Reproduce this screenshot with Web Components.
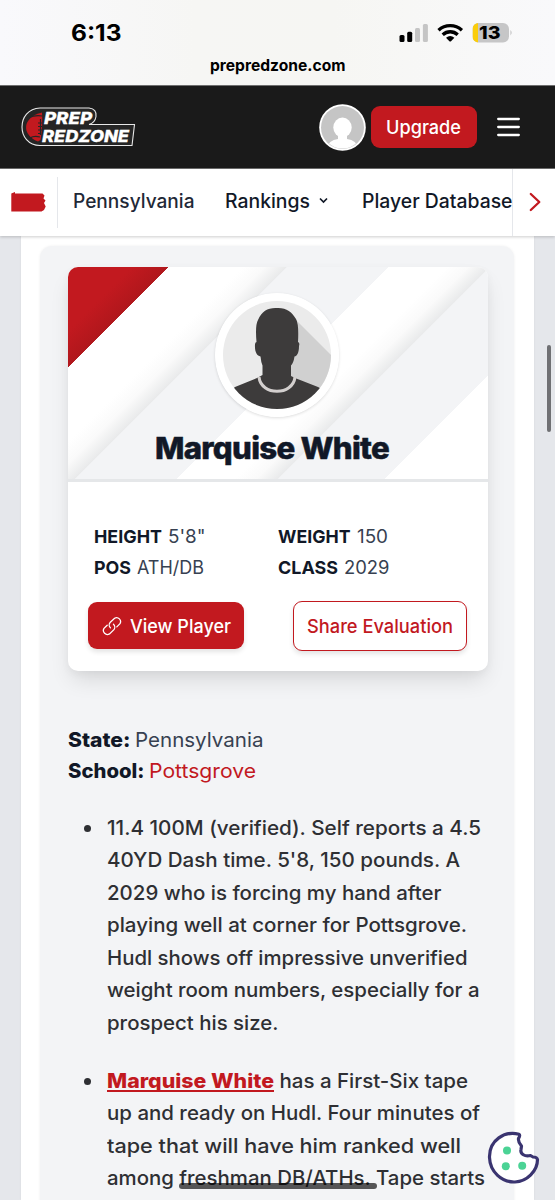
<!DOCTYPE html>
<html lang="en">
<head>
<meta charset="utf-8">
<title>Prep Redzone – Marquise White</title>
<style>
html,body{margin:0;padding:0}
body{width:555px;height:1200px;overflow:hidden;font-family:Inter,"Open Sans",sans-serif;font-optical-sizing:none;font-variation-settings:"opsz" 14;background:#e5e7eb}
</style>
</head>
<body>
<phone-screen>
  <status-bar slot="top"></status-bar>
  <site-header slot="top"></site-header>
  <site-nav slot="top"></site-nav>
  <article-panel>
    <player-card name="Marquise White">
      <stat-item slot="stats" label="HEIGHT" lw="68" value="5'8&quot;" vw="37.5"></stat-item>
      <stat-item slot="stats" label="WEIGHT" lw="72.5" value="150" vw="31"></stat-item>
      <stat-item slot="stats" label="POS" lw="37" value="ATH/DB" vw="67"></stat-item>
      <stat-item slot="stats" label="CLASS" lw="60" value="2029" vw="45.5"></stat-item>
    </player-card>
    <player-facts></player-facts>
    <bullet-item>
      <text-line w="374">11.4 100M (verified). Self reports a 4.5</text-line>
      <text-line w="353">40YD Dash time. 5'8, 150 pounds. A</text-line>
      <text-line w="334.5">2029 who is forcing my hand after</text-line>
      <text-line w="360">playing well at corner for Pottsgrove.</text-line>
      <text-line w="360.5">Hudl shows off impressive unverified</text-line>
      <text-line w="372.5">weight room numbers, especially for a</text-line>
      <text-line w="171.5">prospect his size.</text-line>
    </bullet-item>
    <bullet-item>
      <div style="display:flex"><text-line w="167" style="font-weight:800;color:#c2191f;--line:underline">Marquise White</text-line><text-line w="194"> has a First-Six tape</text-line></div>
      <text-line w="373">up and ready on Hudl. Four minutes of</text-line>
      <text-line w="354">tape that will have him ranked well</text-line>
      <text-line w="378">among freshman DB/ATHs. Tape starts</text-line>
    </bullet-item>
  </article-panel>
  <cookie-button slot="overlay"></cookie-button>
</phone-screen>

<script>
function define(name, html, ready) {
  const t = document.createElement('template');
  t.innerHTML = html;
  customElements.define(name, class extends HTMLElement {
    constructor() {
      super();
      this.attachShadow({mode: 'open'}).appendChild(t.content.cloneNode(true));
    }
    connectedCallback() { if (ready) ready(this, this.shadowRoot); }
  });
}

/* One line of text, stretched to occupy a given width. */
define('text-line', `<style>
:host{display:block;white-space:pre}
span{display:inline-block;white-space:pre;transform-origin:0 50%;text-decoration:var(--line,none);text-decoration-thickness:1.5px;text-underline-offset:2px;text-decoration-skip-ink:none}
</style><span><slot></slot></span>`, (el, root) => {
  const w = parseFloat(el.getAttribute('w'));
  const span = root.querySelector('span');
  const fit = () => {
    span.style.transform = 'none';
    const natural = span.getBoundingClientRect().width;
    if (!natural) return;
    el.style.width = w + 'px';
    span.style.transform = 'scaleX(' + (w / natural).toFixed(5) + ')';
  };
  fit();
  document.fonts.ready.then(fit);
});

define('phone-screen', `<style>
:host{display:flex;flex-direction:column;position:relative;width:555px;height:1200px;overflow:hidden;background:#e5e7eb}
.top{position:relative;z-index:2;flex:none}
.page{flex:1;min-height:0;margin:0 21px;background:#fff;padding:10px 20px 0 19px;box-shadow:0 0 2px #0001}
.scroll{position:absolute;right:4px;top:345px;width:4px;height:87px;border-radius:2px;background:#6f7073}
.home{position:absolute;left:179px;top:1183px;width:198px;height:6px;border-radius:3px;background:#000000a6}
.overlay{position:absolute;left:487px;top:1131px;z-index:3}
</style>
<div class="top"><slot name="top"></slot></div>
<div class="page"><slot></slot></div>
<div class="scroll"></div><div class="home"></div><div class="overlay"><slot name="overlay"></slot></div>`);

define('status-bar', `<style>
:host{display:block;height:86px;background:linear-gradient(90deg,#f9f9fc,#f6f6f4 35%,#f6f6f3 60%,#f9f9fb);color:#000;border-bottom:1px solid #6e6e6e;box-sizing:border-box}
.row{display:flex;height:54px;padding:12px 42px 0 71px;box-sizing:border-box;justify-content:space-between}
.time{font-size:23px;font-weight:720;line-height:42px}
.icons{display:flex;align-items:center;height:42px}
.host{font-size:16px;font-weight:720;line-height:22px;display:flex;justify-content:center}
</style>
<div class="row"><text-line class="time" w="50.500">6:13</text-line>
<div class="icons">
<svg width="114" height="22" viewBox="0 0 114 22">
<rect x="0.5" y="13" width="5" height="7" rx="1.5"/><rect x="8.2" y="9.8" width="5" height="10.2" rx="1.5"/><rect x="16" y="6" width="5" height="14" rx="1.5" fill="#c5c5c5"/><rect x="23.9" y="2" width="5" height="18" rx="1.5" fill="#c5c5c5"/>
<g fill="none" stroke="#000" stroke-width="3.3"><path d="M39.500 8.200a17.300 17.300 0 0 1 23.400 0"/><path d="M43.700 12.700a11 11 0 0 1 15 0"/></g>
<path d="M47 15.700q4.200-3.500 8.400 0l-3.400 3.500q-.8.700-1.600 0z"/>
<clipPath id="b"><rect x="73.500" y="1" width="36.500" height="19.500" rx="6"/></clipPath>
<g clip-path="url(#b)"><rect x="73.500" y="1" width="37" height="20" fill="#c6c6c7"/><rect x="73.500" y="1" width="5.500" height="20" fill="#fbcd0b"/></g>
<path d="M111.500 8q2.200 2.700 0 5.400z" fill="#bbb"/>
<text x="80" y="17.200" font-size="18" font-weight="800" textLength="21.500" lengthAdjust="spacingAndGlyphs">13</text>
</svg></div></div>
<div class="host"><text-line w="135.500">prepredzone.com</text-line></div>`);

define('site-header', `<style>
:host{display:flex;height:83px;box-sizing:border-box;background:#1a1a1a;align-items:center;padding:0 34.500px 0 19.500px;border-bottom:1px solid #6d6d6d}
.logo{margin-right:auto;display:block}
.btn{width:106.500px;height:42px;border-radius:9px;background:#c2191f;color:#fff;display:flex;align-items:center;justify-content:center;font-size:18.500px;font-weight:540;margin:0 19.500px 0 5px}
svg{display:block}
</style>
<svg class="logo" width="116" height="42" viewBox="0 0 116 42">
<path d="M20 2H69Q77 3 76 10.500Q75 17 69 18.500H114.500L112 39.500H20C-4 39-4 3 20 2Z" fill="#252525" stroke="#e8e8e8" stroke-width="1.100"/>
<path d="M22 6.500C2 11 1 29 18 35.500L20.500 34Q23 20 22 6.500Z" fill="#c2191f"/>
<path d="M9 11.500Q15 9 22 10M10 32Q14 29.500 20 31M18 17h4M18 20.500h4M18 24h4M18 27.500h3M20.500 13V29" stroke="#252525" stroke-width="1.200" fill="none"/>
<g fill="#fff" stroke="#fff" stroke-width=".3" font-weight="800" font-style="italic"><text x="24" y="18" font-size="16.500" textLength="48" lengthAdjust="spacingAndGlyphs">PREP</text><text x="22" y="35.500" font-size="16.500" textLength="87" lengthAdjust="spacingAndGlyphs">REDZONE</text></g>
</svg>
<svg width="47" height="47" viewBox="0 0 47 47"><clipPath id="c"><circle cx="23.500" cy="23.500" r="21"/></clipPath><circle cx="23.500" cy="23.500" r="23.300" fill="#fff"/><circle cx="23.500" cy="23.500" r="21.500" fill="#c5c5c5"/><g clip-path="url(#c)" fill="#fff"><ellipse cx="23.500" cy="23.500" rx="9.200" ry="10"/><path d="M19 29v6Q8 36 7 48H40Q39 36 28 35V29z"/></g></svg>
<div class="btn"><text-line w="75">Upgrade</text-line></div>
<svg width="24" height="24" viewBox="0 0 24 24" stroke="#fff" stroke-width="2.300" stroke-linecap="round"><path d="M1.200 4H21.800M1.200 12H21.800M1.200 20H21.800"/></svg>`);

define('site-nav', `<style>
:host{display:flex;height:67px;background:#fff;box-shadow:0 1px 3px #0003;position:relative;align-items:stretch;color:#111827;font-size:19.500px;font-weight:530;line-height:64px}
.flag{padding:22px 11px 0 11px;width:35px;flex:none}
.div{width:1px;background:#e5e7eb;margin:8px 14.500px 8px 0;flex:none}
.a{margin-right:31px;color:#1f2937}.arr{margin:0 34px 0 9px;padding-top:27px}
.end{position:absolute;left:512px;top:0;width:42px;height:67px;border-left:1px solid #e5e7eb;background:#fff}
text-line{flex:none}
svg{display:block;flex:none}
</style>
<div class="flag"><svg width="36" height="23" viewBox="0 0 36 23"><path d="M.3 2.500L4 1V2.500H31.500L33.500 4.500L32.500 7.500L34.500 9.500L33 12L34.700 15.500L33 19L30.500 20.500H.3Z" fill="#c2191f"/></svg></div>
<div class="div"></div>
<text-line class="a" w="121.500">Pennsylvania</text-line>
<text-line w="85">Rankings</text-line>
<svg class="arr" width="9" height="9" viewBox="0 0 9 9" fill="none" stroke="#111827" stroke-width="1.700"><path d="M1 2.500L4.500 6L8 2.500"/></svg>
<text-line w="150.500">Player Database</text-line>
<div class="end"><svg width="42" height="67" viewBox="0 0 42 67" fill="none" stroke="#c2191f" stroke-width="2.300" stroke-linecap="round" stroke-linejoin="round"><path d="M17.800 25L26.300 33L17.800 41"/></svg></div>`);

define('article-panel', `<style>
:host{display:block;height:1000px;box-sizing:border-box;background:#f3f4f6;border-radius:12px;padding:21px 26px 0 27.500px;box-shadow:0 0 3px #0001}
</style><slot></slot>`);

define('player-card', `<style>
:host{display:block;width:420.500px;height:404px;border-radius:10px;background:#fff;overflow:hidden;box-shadow:0 12px 22px -4px #0000001f,0 3px 9px #0000000a}
.hero{height:215px;box-sizing:border-box;border-bottom:3px solid #e5e7e9;display:flex;flex-direction:column;align-items:center;padding-top:26px;
background:linear-gradient(135deg,#c2191f 0,#c2191f 45px,#b0171c 70.700px,#fff 71.200px,#fff 124px,#fafafa 139px,#e9eaeb 154.500px,#f3f4f6 155px,#f3f4f6 226.500px,#fff 227px,#fff 268px,#fafafa 283px,#e9eaeb 298px,#f3f4f6 298.500px,#f3f4f6 373.500px,#fff 374px)}
.hero svg{display:block;border-radius:50%;box-shadow:0 1px 3px #0002;flex:none;margin-right:.8px}
.name{font-size:30px;font-weight:800;color:#111827;line-height:36px;margin:12.500px 11px 0 0;letter-spacing:-.7px;-webkit-text-stroke:.5px #111827}
.stats{display:grid;grid-template-columns:184px 1fr;grid-auto-rows:31px;padding:38.500px 0 0 26.500px}
.btns{display:flex;justify-content:space-between;align-items:center;padding:0 21px 0 20.500px;margin-top:18px;font-size:18.500px;font-weight:540}
.b{box-sizing:border-box;display:flex;align-items:center;justify-content:center;border-radius:9px;box-shadow:0 3px 5px #0000001c}
.v{width:156px;height:47px;background:#c2191f;color:#fff;gap:8px}
.s{width:174.500px;height:50px;border:1.500px solid #c2191f;color:#c2191f;background:#fff}
</style>
<div class="hero">
<svg width="124" height="124" viewBox="0 0 124 124"><clipPath id="c"><circle cx="62" cy="62" r="54"/></clipPath><circle cx="62" cy="62" r="62" fill="#fff"/>
<g clip-path="url(#c)"><rect width="124" height="124" fill="#ebebeb"/><path d="M77 23L124 70V124H60Z" fill="#d0d0d0"/>
<path d="M62 15C71 14.500 77 19 81 26Q84 31 83 49Q85 49.500 84 53C84 60 82 63 79.500 63.500Q78.500 70 76 72.500V83L80 85L103 94Q112 98 115 124H7Q13 97 20 94L42 85L47.500 82V72.500Q46 69 45.500 63.500C42 63 39.500 59 40 51.500Q40 49 41.500 49Q40 32 43 27C47 18 53 14.500 62 15Z" fill="#3d3b3b"/>
<path d="M44 84C46 103 78 103 80 84" fill="none" stroke="#d3cfce" stroke-width="3"/></g></svg>
<text-line class="name" w="234"></text-line>
</div>
<div class="stats"><slot name="stats"></slot></div>
<div class="btns"><div class="b v"><svg width="20" height="20" viewBox="0 0 20 20" fill="none" stroke="#fff" stroke-width="1.300" stroke-linecap="round"><path d="M8.400 11.800A4 4 0 0 1 8.300 6.200L12.600 2.200A4 4 0 0 1 18 7.700L14.800 10.900M11.500 8.300A4 4 0 0 1 11.700 13.900L7.500 17.900A4 4 0 0 1 2 12.400L5.200 9.200"/></svg><text-line w="101">View Player</text-line></div>
<div class="b s"><text-line w="146">Share Evaluation</text-line></div></div>`,
(el, root) => { const n = root.querySelector('.name'); n.textContent = el.getAttribute('name'); n.connectedCallback && n.connectedCallback(); });

define('stat-item', `<style>
:host{display:flex;font-size:18px;line-height:31px;gap:6px;color:#374151}
.l{font-weight:700;color:#111827}
</style><text-line class="l"></text-line><text-line class="v"></text-line>`,
(el, root) => {
  for (const [c, t, w] of [['.l', 'label', 'lw'], ['.v', 'value', 'vw']]) {
    const n = root.querySelector(c);
    n.setAttribute('w', el.getAttribute(w));
    n.textContent = el.getAttribute(t);
    n.connectedCallback();
  }
});

define('player-facts', `<style>
:host{display:block;font-size:20px;line-height:31px;color:#374151;padding:53.500px 0 25px}
div{display:flex;gap:5px}
b{font-weight:800;color:#111827}i{font-style:normal;color:#c2191f}
</style><div><b><text-line w="62.500">State:</text-line></b><text-line w="128.500">Pennsylvania</text-line></div>
<div><b><text-line w="76.500">School:</text-line></b><i><text-line w="107">Pottsgrove</text-line></i></div>`);

define('bullet-item', `<style>
:host{display:block;position:relative;padding-left:39px;margin-bottom:25.500px;font-size:20px;font-weight:530;line-height:32.550px;color:#2e2f33}
:host::before{content:"";position:absolute;left:16.500px;top:13.500px;width:7px;height:7px;border-radius:50%;background:#2e2f33}
</style><slot></slot>`);

define('cookie-button', `<style>:host{display:block}svg{display:block}</style>
<svg width="54" height="54" viewBox="0 0 54 54"><path d="M32 3.200C18-.5 2 9 2.500 26.500C3 41 15 51.500 28 51C40 50.500 50.500 40 50.500 28.500Q50 26 46 26L43.500 24.500C38 26 33 23 34 18.500L34.500 15Q31 11 31.500 7.500Q33.500 4.500 32 3.200Z" fill="#fff" stroke="#3a3470" stroke-width="3.200" stroke-linejoin="round"/><g fill="#4bd395"><circle cx="20" cy="19.500" r="4"/><circle cx="18.800" cy="35.300" r="4"/><circle cx="35.200" cy="34.800" r="4"/></g></svg>`);
</script>
</body>
</html>
